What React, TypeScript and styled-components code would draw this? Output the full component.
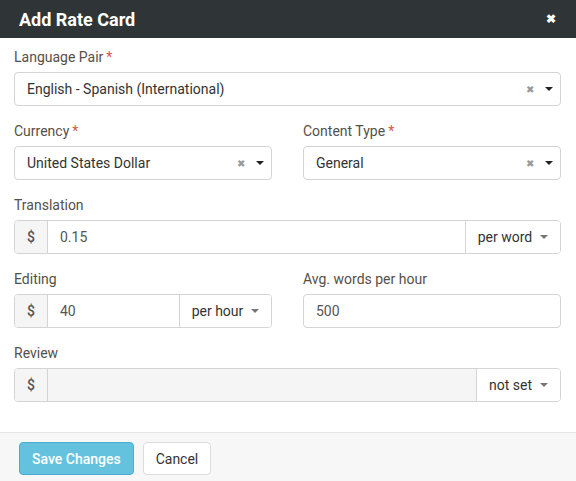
import React from "react";
import styled, { createGlobalStyle } from "styled-components";

const Global = createGlobalStyle`
  html, body { margin: 0; padding: 0; background: #fff; }
  body { font-family: Roboto, "Liberation Sans", sans-serif; }
  * { box-sizing: border-box; }
`;

const Modal = styled.div`
  width: 576px;
  height: 481px;
  display: flex;
  flex-direction: column;
  background: #fff;
  overflow: hidden;
`;

const Header = styled.div`
  height: 38px;
  background: #2f3537;
  display: flex;
  align-items: center;
  justify-content: space-between;
  padding: 0 20px 0 19px;
  flex-shrink: 0;
`;

const Title = styled.h4`
  margin: 0;
  color: #fff;
  font-size: 18px;
  font-weight: 700;
`;

const Close = styled.span`
  color: #fff;
  font-size: 12px;
  font-weight: 700;
  line-height: 1;
`;

const Body = styled.div`
  padding: 9px 15px 15px 14px;
  display: flex;
  flex-direction: column;
  flex-shrink: 0;
`;

const Row = styled.div`
  display: grid;
  grid-template-columns: 258px 258px;
  column-gap: 31px;
`;

const Group = styled.div`
  margin-bottom: 15px;
  display: flex;
  flex-direction: column;
`;

const Label = styled.label`
  font-size: 14px;
  line-height: 20px;
  color: #555049;
  margin-bottom: 5px;
`;

const Req = styled.span`
  color: #d9534f;
  margin-left: 3px;
`;

const SelectBox = styled.div`
  height: 34px;
  border: 1px solid #d4d4d4;
  border-radius: 4px;
  display: flex;
  align-items: center;
  padding: 0 7px 0 12px;
  font-size: 14px;
  color: #333;
`;

const SelectValue = styled.span`
  flex: 1;
`;

const Clear = styled.span`
  color: #999;
  font-size: 10px;
  margin-right: 11px;
`;

const Caret = styled.span<{ $light?: boolean }>`
  display: inline-block;
  width: 0;
  height: 0;
  border-left: 4px solid transparent;
  border-right: 4px solid transparent;
  border-top: 4px solid ${(p) => (p.$light ? "#777" : "#222")};
`;

const InputGroup = styled.div`
  height: 34px;
  display: flex;
  border: 1px solid #d4d4d4;
  border-radius: 4px;
  overflow: hidden;
  font-size: 14px;
`;

const Addon = styled.span`
  width: 33px;
  flex-shrink: 0;
  background: #f5f5f5;
  border-right: 1px solid #d4d4d4;
  display: flex;
  align-items: center;
  justify-content: center;
  color: #555;
  font-weight: 500;
`;

const Field = styled.div<{ $disabled?: boolean }>`
  flex: 1;
  display: flex;
  align-items: center;
  padding: 0 12px;
  color: #555;
  background: ${(p) => (p.$disabled ? "#f5f5f5" : "#fff")};
`;

const Unit = styled.span<{ $w: number }>`
  width: ${(p) => p.$w}px;
  flex-shrink: 0;
  border-left: 1px solid #d4d4d4;
  display: flex;
  align-items: center;
  justify-content: center;
  gap: 8px;
  color: #333;
  background: #fff;
`;

const TextInput = styled.div`
  height: 34px;
  border: 1px solid #d4d4d4;
  border-radius: 4px;
  display: flex;
  align-items: center;
  padding: 0 12px;
  font-size: 14px;
  color: #555;
`;

const Footer = styled.div`
  flex: 1;
  border-top: 1px solid #e5e5e5;
  background: #f7f7f7;
  display: flex;
  align-items: flex-start;
  gap: 9px;
  padding: 9px 19px;
`;

const Button = styled.button<{ $primary?: boolean }>`
  height: 33px;
  padding: 0 12px;
  border-radius: 4px;
  font-family: inherit;
  font-size: 14px;
  border: 1px solid ${(p) => (p.$primary ? "#4aaed0" : "#dcdcdc")};
  background: ${(p) => (p.$primary ? "#64c2df" : "#fff")};
  color: ${(p) => (p.$primary ? "#fff" : "#333")};
  font-weight: ${(p) => (p.$primary ? 500 : 400)};
`;

function Select({ value }: { value: string }) {
  return (
    <SelectBox>
      <SelectValue>{value}</SelectValue>
      <Clear>✖</Clear>
      <Caret />
    </SelectBox>
  );
}

export default function App() {
  return (
    <>
      <Global />
      <Modal>
        <Header>
          <Title>Add Rate Card</Title>
          <Close>✖</Close>
        </Header>
        <Body>
          <Group>
            <Label>
              Language Pair<Req>*</Req>
            </Label>
            <Select value="English - Spanish (International)" />
          </Group>
          <Row>
            <Group>
              <Label>
                Currency<Req>*</Req>
              </Label>
              <Select value="United States Dollar" />
            </Group>
            <Group>
              <Label>
                Content Type<Req>*</Req>
              </Label>
              <Select value="General" />
            </Group>
          </Row>
          <Group>
            <Label>Translation</Label>
            <InputGroup>
              <Addon>$</Addon>
              <Field>0.15</Field>
              <Unit $w={95}>
                per word <Caret $light />
              </Unit>
            </InputGroup>
          </Group>
          <Row>
            <Group>
              <Label>Editing</Label>
              <InputGroup>
                <Addon>$</Addon>
                <Field>40</Field>
                <Unit $w={92}>
                  per hour <Caret $light />
                </Unit>
              </InputGroup>
            </Group>
            <Group>
              <Label>Avg. words per hour</Label>
              <TextInput>500</TextInput>
            </Group>
          </Row>
          <Group>
            <Label>Review</Label>
            <InputGroup>
              <Addon>$</Addon>
              <Field $disabled />
              <Unit $w={84}>
                not set <Caret $light />
              </Unit>
            </InputGroup>
          </Group>
        </Body>
        <Footer>
          <Button $primary>Save Changes</Button>
          <Button>Cancel</Button>
        </Footer>
      </Modal>
    </>
  );
}
